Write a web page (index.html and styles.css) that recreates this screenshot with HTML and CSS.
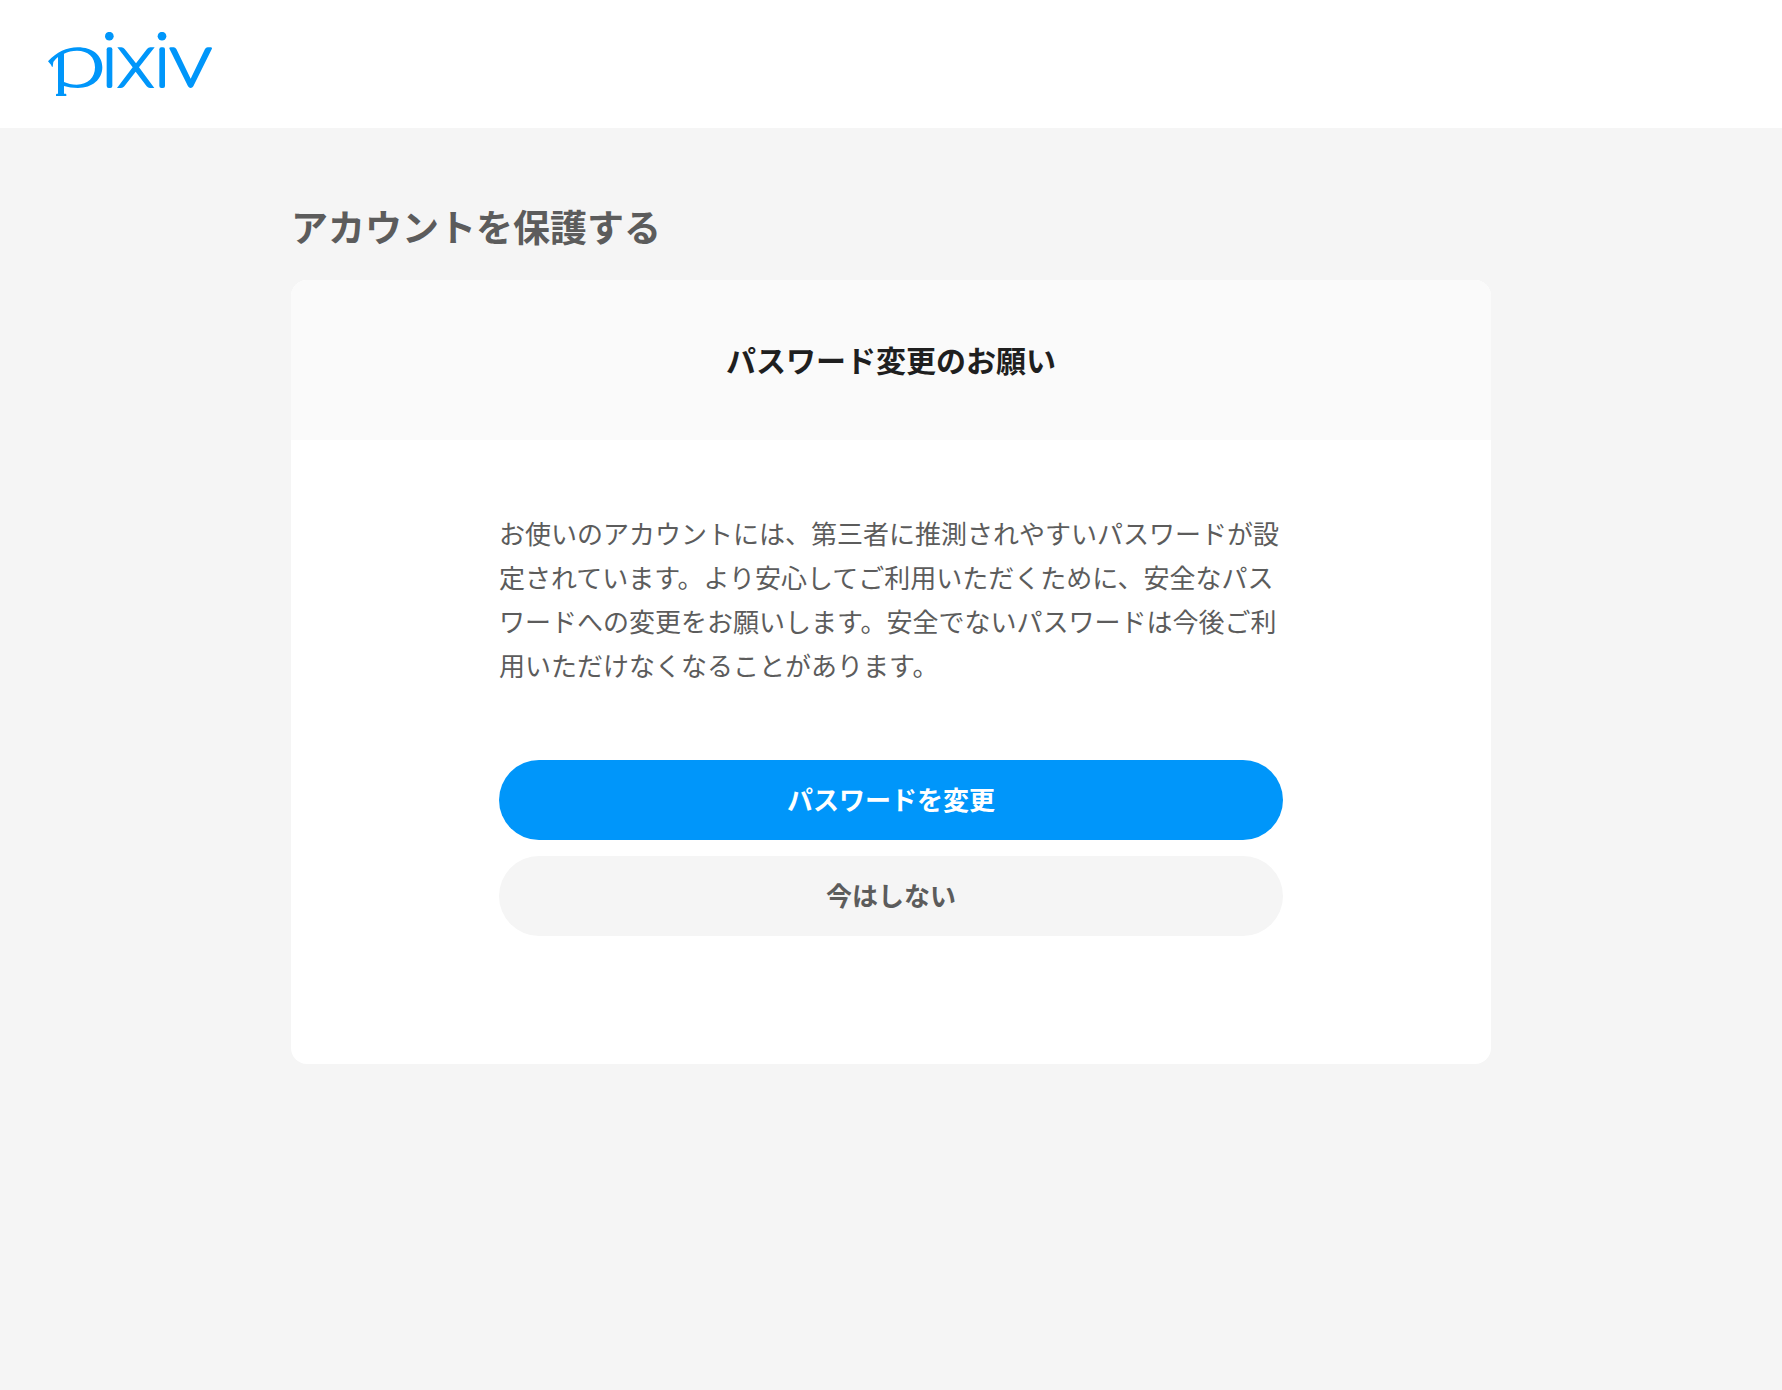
FILE: index.html
```html
<!DOCTYPE html>
<html lang="ja">
<head>
<meta charset="utf-8">
<meta name="viewport" content="width=device-width, initial-scale=1">
<title>アカウントを保護する</title>
<link rel="stylesheet" href="styles.css">
</head>
<body>
<header class="site-header">
  <a class="logo" href="#" aria-label="pixiv">
    <svg class="logo-mark" viewBox="54 36 492 192" aria-hidden="true">
      <path fill-rule="evenodd" d="M54 124C80 96 110 82 143 82C188 82 217 107 217 142C217 178 187 204 144 204C128 204 114 202 102 198V221H107Q109 221 109 224V228H78V224Q78 221 81 221H84V111Q75 118 70 126L68 141Q65 141 63 134ZM102 101V186C113 191 126 194 140 194C174 194 195 173 195 142C195 111 174 92 141 92C127 92 113 95 102 101Z"/>
      <circle cx="238" cy="48.500" r="13"/>
      <rect x="230" y="82" width="17" height="122" rx="6"/>
      <path d="M262 82H274Q280 82 284 87L318 130L351 87Q355 82 361 82H374L327 142L373 204H360Q354 204 350 199L317 155L283 199Q279 204 273 204H261L308 142Z"/>
      <circle cx="396" cy="48.500" r="13"/>
      <rect x="388" y="82" width="17" height="122" rx="6"/>
      <path d="M422 82H431Q436 82 439 87L482 176L525 87Q528 82 533 82H542Q548 82 545 88L490 199Q487 204 482 204Q477 204 474 199L419 88Q416 82 422 82Z"/>
    </svg>
  </a>
</header>
<main class="page">
  <h1 class="page-title">アカウントを保護する</h1>
  <section class="card">
    <header class="card-header">
      <h2 class="card-title">パスワード変更のお願い</h2>
    </header>
    <div class="card-body">
      <p class="message">お使いのアカウントには、第三者に推測されやすいパスワードが設定されています。より安心してご利用いただくために、安全なパスワードへの変更をお願いします。安全でないパスワードは今後ご利用いただけなくなることがあります。</p>
      <div class="actions">
        <button class="button button-primary" type="button">パスワードを変更</button>
        <button class="button" type="button">今はしない</button>
      </div>
    </div>
  </section>
</main>
</body>
</html>
```
FILE: styles.css
```css
*,
*::before,
*::after {
  box-sizing: border-box;
}

body {
  margin: 0;
  min-height: 100vh;
  background: #f5f5f5;
  color: #5c5c5c;
  font-family: "Noto Sans CJK JP", sans-serif;
  font-size: 26px;
  line-height: 44px;
}

h1,
h2,
p {
  margin: 0;
}

.site-header {
  display: flex;
  padding: 32px 48px;
  background: #fff;
}

.logo {
  display: block;
}

.logo-mark {
  display: block;
  width: 164px;
  height: 64px;
  fill: #0096fa;
}

.page {
  max-width: 1200px;
  margin: 0 auto;
  padding: 70px 0;
}

.page-title {
  margin-bottom: 26px;
  font-size: 37px;
  font-weight: 700;
  line-height: 56px;
}

.card {
  overflow: hidden;
  border-radius: 16px;
  background: #fff;
}

.card-header {
  padding: 55px 24px 57px;
  background: #fafafa;
  text-align: center;
}

.card-title {
  color: #1f1f1f;
  font-size: 30px;
  font-weight: 700;
  line-height: 48px;
}

.card-body {
  max-width: 784px;
  margin: 0 auto;
  padding: 71px 0 128px;
}

.actions {
  display: flex;
  flex-direction: column;
  gap: 16px;
  margin-top: 73px;
}

.button {
  padding: 17px 48px 19px;
  border: 0;
  border-radius: 40px;
  background: #f5f5f5;
  color: #5c5c5c;
  font: inherit;
  font-weight: 700;
  cursor: pointer;
}

.button-primary {
  background: #0096fa;
  color: #fff;
}
```
